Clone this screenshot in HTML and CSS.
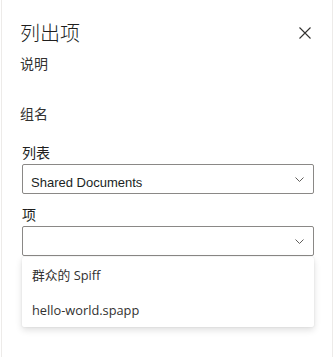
FILE: index.html
```html
<!DOCTYPE html>
<html lang="zh-CN">
<head>
    <meta charset="UTF-8">
    <title>列出项</title>
    <link rel="stylesheet" href="styles.css">
</head>
<body>
    <div class="panel">
        <!-- 标题 -->
        <div class="panel-header">
            <div class="panel-title">列出项</div>
            <button class="close-btn" title="关闭">
                <svg width="12" height="12" viewBox="0 0 12 12"><path d="M0.5 0.5 L11.5 11.5 M11.5 0.5 L0.5 11.5" stroke="#323130" stroke-width="1.1" fill="none"/></svg>
            </button>
        </div>
        <div class="desc">说明</div>
        <div class="group">组名</div>

        <!-- 列表 -->
        <div class="field field-first">
            <label class="field-label">列表</label>
            <div class="dropdown">
                <span class="dropdown-text">Shared Documents</span>
                <svg class="chevron" width="9" height="5" viewBox="0 0 9 5"><path d="M0.5 0.5 L4.5 4.5 L8.5 0.5" stroke="#605e5c" stroke-width="1" fill="none"/></svg>
            </div>
        </div>

        <!-- 项 -->
        <div class="field">
            <label class="field-label">项</label>
            <div class="dropdown">
                <span class="dropdown-text"></span>
                <svg class="chevron" width="9" height="5" viewBox="0 0 9 5"><path d="M0.5 0.5 L4.5 4.5 L8.5 0.5" stroke="#605e5c" stroke-width="1" fill="none"/></svg>
            </div>
            <div class="callout">
                <div class="option">群众的 Spiff</div>
                <div class="option">hello-world.spapp</div>
            </div>
        </div>
    </div>
</body>
</html>
```

FILE: styles.css
```css
body {
    margin: 0;
    padding: 0;
    background: #fff;
    font-family: "Liberation Sans", "Noto Sans CJK SC", sans-serif;
    color: #323130;
}

.panel {
    width: 332px;
    height: 357px;
    margin-left: 1px;
    border-left: 1px solid #edebe9;
    border-right: 1px solid #edebe9;
    box-sizing: border-box;
    padding: 0 20px 0 18px;
}

.panel-header {
    display: flex;
    align-items: center;
    justify-content: space-between;
    padding-top: 20px;
    height: 26px;
}

.panel-title {
    font-family: "Noto Sans CJK SC", sans-serif;
    font-size: 20px;
    font-weight: 300;
    line-height: 26px;
    color: #201f1e;
}

.close-btn {
    background: none;
    border: none;
    padding: 0;
    margin-right: 1px;
    width: 12px;
    height: 12px;
    display: flex;
    cursor: pointer;
}

.desc {
    font-family: "Noto Sans CJK SC", sans-serif;
    font-size: 14px;
    line-height: 20px;
    margin-top: 7px;
}

.group {
    font-family: "Noto Sans CJK SC", sans-serif;
    font-size: 14px;
    line-height: 20px;
    margin-top: 30px;
}

.field {
    margin-left: 2px;
    margin-right: -2px;
    position: relative;
}

.field-first {
    margin-top: 19px;
}

.field-label {
    display: block;
    font-family: "Noto Sans CJK SC", sans-serif;
    font-size: 14px;
    line-height: 20px;
    padding-bottom: 2px;
    color: #201f1e;
}

.dropdown {
    height: 30px;
    box-sizing: border-box;
    border: 1px solid #8a8886;
    border-radius: 2px;
    display: flex;
    align-items: center;
    justify-content: space-between;
    padding: 0 9px 0 8px;
    margin-bottom: 10px;
}

.dropdown-text {
    font-size: 13px;
    color: #201f1e;
    padding-top: 7px;
}

.callout {
    position: absolute;
    top: 53px;
    left: 0;
    right: 0;
    background: #fff;
    box-shadow: 0 3px 7px rgba(0, 0, 0, 0.13), 0 0 2px rgba(0, 0, 0, 0.1);
    border-radius: 2px;
}

.option {
    height: 35px;
    display: flex;
    align-items: center;
    padding-left: 10px;
    font-family: "Open Sans", "Noto Sans CJK SC", sans-serif;
    font-size: 12.8px;
    color: #323130;
}
```
